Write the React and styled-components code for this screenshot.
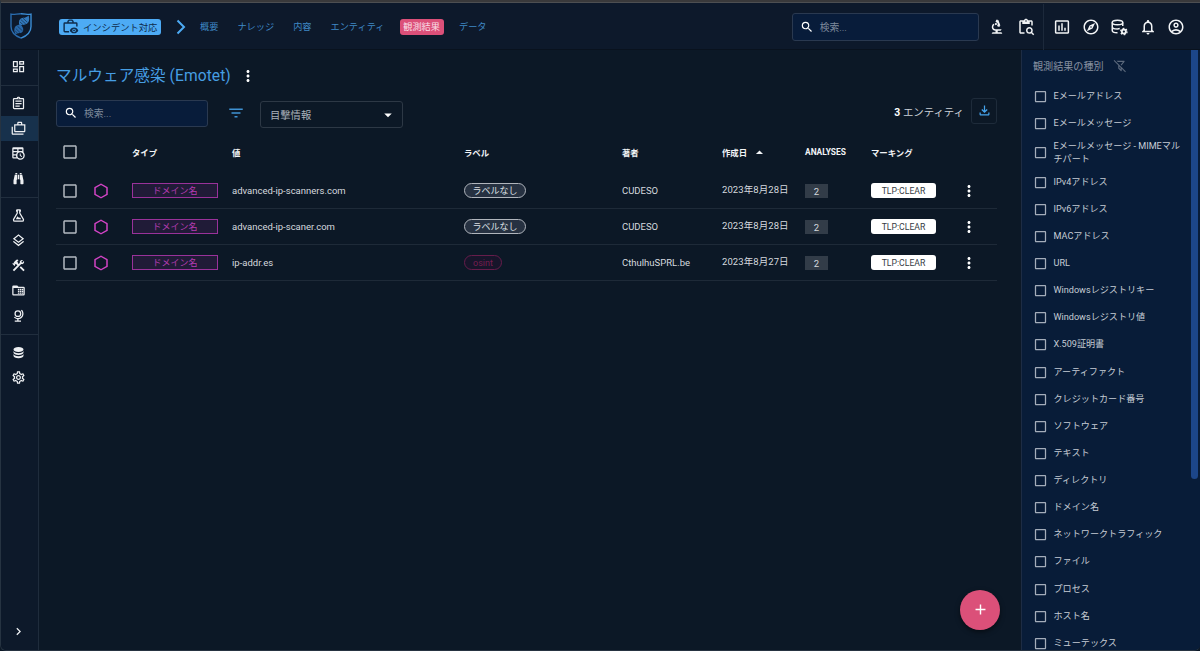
import React from "react";
import styled, { createGlobalStyle, css } from "styled-components";
import {
  MdOutlineDashboard,
  MdOutlineAssignment,
  MdOutlineCases,
  MdOutlineLayers,
  MdConstruction,
  MdOutlineSettings,
  MdChevronRight,
  MdSearch,
  MdBiotech,
  MdOutlineContentPasteSearch,
  MdInsertChartOutlined,
  MdOutlineExplore,
  MdNotificationsNone,
  MdOutlineAccountCircle,
  MdMoreVert,
  MdFilterList,
  MdArrowDropDown,
  MdArrowDropUp,
  MdOutlineFileDownload,
  MdCheckBoxOutlineBlank,
  MdAdd,
} from "react-icons/md";

const GlobalStyle = createGlobalStyle`
  * {
    box-sizing: border-box;
  }

  body {
    margin: 0;
    background: #0c1826;
    font-family: "Roboto", "Noto Sans CJK JP", sans-serif;
    font-size: 9.75px;
    color: #d5d9df;
    overflow: hidden;
  }

  svg {
    display: block;
    flex-shrink: 0;
  }
`;

const paths = {
  timetable:
    "M14,12H15.5V14.82L17.94,16.23L17.19,17.53L14,15.69V12M4,2H18A2,2 0 0,1 20,4V10.1C21.24,11.36 22,13.09 22,15A7,7 0 0,1 15,22C13.09,22 11.36,21.24 10.1,20H4A2,2 0 0,1 2,18V4A2,2 0 0,1 4,2M4,15V18H8.67C8.24,17.09 8,16.07 8,15H4M4,8H10V5H4V8M18,8V5H12V8H18M4,13H8.29C8.63,11.85 9.26,10.82 10.1,10H4V13M15,10.15A4.85,4.85 0 0,0 10.15,15C10.15,17.68 12.32,19.85 15,19.85A4.85,4.85 0 0,0 19.85,15C19.85,12.32 17.68,10.15 15,10.15Z",
  binoculars:
    "M11,6H13V13H11V6M9,20A1,1 0 0,1 8,21H5A1,1 0 0,1 4,20V15L6,6H10V13A1,1 0 0,1 9,14V20M10,5H7V3H10V5M15,20V14A1,1 0 0,1 14,13V6H18L20,15V20A1,1 0 0,1 19,21H16A1,1 0 0,1 15,20M14,5V3H17V5H14Z",
  flask:
    "M5,19A1,1 0 0,0 6,20H18A1,1 0 0,0 19,19C19,18.79 18.93,18.59 18.82,18.43L13,8.35V4H11V8.35L5.18,18.43C5.07,18.59 5,18.79 5,19M6,22A3,3 0 0,1 3,19C3,18.4 3.18,17.84 3.5,17.37L9,7.81V6A1,1 0 0,1 8,5V4A2,2 0 0,1 10,2H14A2,2 0 0,1 16,4V5A1,1 0 0,1 15,6V7.81L20.5,17.37C20.82,17.84 21,18.4 21,19A3,3 0 0,1 18,22H6M13,16L14.34,14.66L16.27,18H7.73L10.39,13.39L13,16Z",
  folderTable:
    "M20,6H12L10,4H4A2,2 0 0,0 2,6V18A2,2 0 0,0 4,20H20A2,2 0 0,0 22,18V8A2,2 0 0,0 20,6M20,18H4V8H20V18M11,9H13.4V11.2H11V9M14.2,9H16.4V11.2H14.2V9M17.2,9H19.4V11.2H17.2V9M11,12H13.4V14.2H11V12M14.2,12H16.4V14.2H14.2V12M17.2,12H19.4V14.2H17.2V12M11,15H13.4V17.2H11V15M14.2,15H16.4V17.2H14.2V15M17.2,15H19.4V17.2H17.2V15Z",
  globe:
    "M17.36,2.64L15.95,4.06C17.26,5.37 18,7.14 18,9A7,7 0 0,1 11,16C9.15,16 7.37,15.26 6.06,13.95L4.64,15.36C6.08,16.8 7.97,17.71 10,17.93V20H6V22H16V20H12V17.94C16.55,17.43 20,13.58 20,9C20,6.62 19.05,4.33 17.36,2.64M11,3.5A5.5,5.5 0 0,0 5.5,9A5.5,5.5 0 0,0 11,14.5A5.5,5.5 0 0,0 16.5,9A5.5,5.5 0 0,0 11,3.5M11,5.5C12.94,5.5 14.5,7.07 14.5,9A3.5,3.5 0 0,1 11,12.5A3.5,3.5 0 0,1 7.5,9A3.5,3.5 0 0,1 11,5.5Z",
  database:
    "M12,3C7.58,3 4,4.79 4,7C4,9.21 7.58,11 12,11C16.42,11 20,9.21 20,7C20,4.79 16.42,3 12,3M4,9V12C4,14.21 7.58,16 12,16C16.42,16 20,14.21 20,12V9C20,11.21 16.42,13 12,13C7.58,13 4,11.21 4,9M4,14V17C4,19.21 7.58,21 12,21C16.42,21 20,19.21 20,17V14C20,16.21 16.42,18 12,18C7.58,18 4,16.21 4,14Z",
  hexagon:
    "M21,16.5C21,16.88 20.79,17.21 20.47,17.38L12.57,21.82C12.41,21.94 12.21,22 12,22C11.79,22 11.59,21.94 11.43,21.82L3.53,17.38C3.21,17.21 3,16.88 3,16.5V7.5C3,7.12 3.21,6.79 3.53,6.62L11.43,2.18C11.59,2.06 11.79,2 12,2C12.21,2 12.41,2.06 12.57,2.18L20.47,6.62C20.79,6.79 21,7.12 21,7.5V16.5M12,4.15L5,8.09V15.91L12,19.85L19,15.91V8.09L12,4.15Z",
  filterOff:
    "M2.39,1.73L1.11,3L9,10.89V15.87C8.96,16.16 9.06,16.47 9.29,16.7L13.3,20.71C13.69,21.1 14.32,21.1 14.71,20.71C14.94,20.5 15.04,20.18 15,19.88V16.89L20.84,22.73L22.11,21.46L15,14.35V14.34L13,12.35L11,10.34L4.15,3.5L2.39,1.73M6.21,3L8.2,5H16.96L13.11,9.91L14.53,11.33L19.79,4.62C20.13,4.19 20.05,3.56 19.62,3.22C19.43,3.08 19.22,3 19,3H6.21M11,12.89L13,14.89V17.58L11,15.58V12.89Z",
};

const Icon = ({ name, size = 15 }) => (
  <svg width={size} height={size} viewBox="0 0 24 24" fill="currentColor">
    <path fillRule="evenodd" d={paths[name]} />
  </svg>
);

const BriefcaseEyeIcon = () => (
  <svg width="17" height="17" viewBox="0 0 24 24" fill="none" stroke="currentColor" strokeWidth="2">
    <path d="M10 19.5H4a1 1 0 0 1-1-1V8a1 1 0 0 1 1-1h16a1 1 0 0 1 1 1v4M8.500 7V4.500l1.500-1.500h4l1.500 1.500V7" />
    <path
      fill="currentColor"
      stroke="none"
      fillRule="evenodd"
      d="M17 13.500c-2.800 0-5 1.600-6 4 1 2.400 3.200 4 6 4s5-1.600 6-4c-1-2.400-3.200-4-6-4m0 1.500a2.500 2.500 0 1 1 0 5 2.500 2.500 0 0 1 0-5m0 1.200a1.300 1.300 0 1 0 0 2.600 1.300 1.300 0 0 0 0-2.600"
    />
  </svg>
);

const DatabaseCogIcon = () => (
  <svg width="18" height="18" viewBox="0 0 24 24" fill="none" stroke="currentColor" strokeWidth="2">
    <ellipse cx="10" cy="6" rx="7" ry="3" />
    <path d="M3 6v10.500c0 1.600 3 3 7 3M3 11.500c0 1.600 3 3 7 3 1.300 0 2-.1 3-.4M17 6v4.500" />
    <circle cx="18.500" cy="18" r="2.700" strokeWidth="2.400" />
    <circle cx="18.500" cy="18" r="4.300" strokeWidth="1.600" strokeDasharray="2.250 2.250" />
  </svg>
);

const LogoIcon = () => (
  <svg width="22" height="26" viewBox="0 0 22 26" fill="none">
    <path
      d="M11 .8c-4 0-7 1-10 .4v12.300C1 19 5.500 23 11 25.200"
      stroke="#2a6cae"
      strokeWidth="1.400"
    />
    <path
      d="M11 .8c4 0 7 1 10 .4v12.300c0 5.500-4.500 9.500-10 11.700"
      stroke="#3b8ed6"
      strokeWidth="1.400"
    />
    <path
      d="M18.600 2.400c1.400 4 .4 7.600-2.800 8.900-2.400.9-4.300.6-5.800 1.700C8.400 10.500 8.600 7 10.800 5.500c1.800-1 3.400-.4 5-1.200 1.200-.6 2-1.200 2.800-1.900z"
      fill="#3278ba"
    />
    <path
      d="M10.400 11.400c1.800 1.500 3.300 3.600 2.800 6-.5 1.900-2 2.500-3.600 2.700-1.800.2-2.700.5-3.800 1.500C4.100 19.300 3.800 16 5 13.900c1-1.700 3.200-2.300 5.400-2.500z"
      fill="#2867a8"
    />
    <path
      d="M10.800 6.500l5 4.500M13 5.200l4.300 4M9.800 8.800l3.300 3M5.800 15.500l4.500 4.400M5.200 18l2.500 2.400M7.500 13.300l5 4.500"
      stroke="#14304f"
      strokeWidth=".7"
    />
  </svg>
);

const Frame = styled.div`
  display: flex;
  flex-direction: column;
  width: 1200px;
  height: 651px;
  overflow: hidden;
  border-top: 2px solid #39393b;
  border-left: 1px solid #263341;
  border-bottom: 1px solid #263341;
  border-radius: 0 0 6px 6px;
`;

const TopBar = styled.header`
  display: flex;
  align-items: center;
  height: 48px;
  padding-top: 1px;
  flex-shrink: 0;
  background: #0d192b;
  border-top: 1px solid #4d4f52;
  border-bottom: 1px solid #09121e;
`;

const Logo = styled.div`
  width: 58px;
  padding: 0 0 2px 8.500px;
`;

const CaseChip = styled.div`
  display: flex;
  align-items: center;
  gap: 4px;
  width: 102px;
  height: 16px;
  padding-left: 3px;
  border-radius: 3px;
  background: #4dabf5;
  color: #0f2c4c;
  font-size: 9.3px;
  white-space: nowrap;
`;

const Separator = styled.div`
  display: flex;
  justify-content: center;
  width: 39px;
  color: #4dabf5;
`;

const Nav = styled.nav`
  display: flex;
  align-items: center;
  gap: 19px;
  flex: 1;
`;

const NavItem = styled.a`
  height: 16px;
  line-height: 16px;
  font-size: 9.2px;
  color: #3f88c5;
  white-space: nowrap;

  ${({ $active }) =>
    $active &&
    css`
      margin: 0 -3.700px -0px -4px;
      padding: 0 3.700px;
      border-radius: 3px;
      background: #dc5079;
      color: #f9dde6;
    `}
`;

const SearchField = styled.div`
  display: flex;
  align-items: center;
  gap: 6px;
  width: ${({ $width }) => $width}px;
  height: ${({ $height }) => $height}px;
  padding-left: 7px;
  border: 1px solid #2a3950;
  border-radius: 3px;
  background: #081c3a;
  color: #7f8b9d;
  font-size: 9.75px;

  svg {
    color: #fff;
  }
`;

const TopIcons = styled.div`
  display: flex;
  align-items: center;
  height: 46px;
  color: #f1f3f5;

  svg {
    width: 18px;
    height: 18px;
  }
`;

const QuickIcons = styled(TopIcons)`
  gap: 11px;
  padding: 0 8.500px 0 9px;
  border-right: 1px solid #1c293b;
`;

const UserIcons = styled(TopIcons)`
  gap: 10.600px;
  padding: 0 14.700px 0 8.800px;
`;

const Body = styled.div`
  display: flex;
  flex: 1;
  min-height: 0;
`;

const Sidebar = styled.aside`
  display: flex;
  flex-direction: column;
  width: 38px;
  flex-shrink: 0;
  border-right: 1px solid #1f2c3c;
  background: #0d192a;
  color: #eef0f3;
`;

const MenuGroup = styled.div`
  padding: 5.500px 0;

  &:first-child {
    padding-top: 4px;
  }

  & + & {
    border-top: 1px solid #212e3e;
  }
`;

const MenuItem = styled.div`
  display: flex;
  align-items: center;
  justify-content: center;
  height: 25px;
  padding-right: 2px;
  background: ${({ $active }) => ($active ? "#17314c" : "transparent")};
`;

const ExpandButton = styled.div`
  display: flex;
  justify-content: center;
  margin-top: auto;
  padding: 0 2px 11px 0;
`;

const Main = styled.main`
  display: flex;
  flex-direction: column;
  position: relative;
  flex: 1;
  padding: 15px 24px 0 17px;
  background: #0c1826;
`;

const TitleRow = styled.div`
  display: flex;
  align-items: center;
  gap: 8px;
  height: 21px;
  color: #fff;
`;

const Title = styled.h1`
  margin: 0;
  padding-top: 1px;
  font-size: 15.600px;
  letter-spacing: 0.07px;
  font-weight: 400;
  line-height: 21px;
  color: #469ee3;
  white-space: nowrap;
`;

const Toolbar = styled.div`
  display: flex;
  align-items: center;
  height: 28px;
  margin-top: 13px;
`;

const FilterButton = styled.div`
  display: flex;
  justify-content: center;
  width: 52px;
  padding-left: 3px;
  color: #3f92d3;
`;

const Select = styled.div`
  display: flex;
  align-items: center;
  justify-content: space-between;
  width: 143px;
  height: 27px;
  margin-top: 3px;
  padding: 0 5px 0 9px;
  border: 1px solid #2d3845;
  border-radius: 3px;
  font-size: 10.300px;
  color: #aab1ba;

  svg {
    color: #fff;
  }
`;

const EntityCount = styled.div`
  margin: 0 7px 4px auto;
  font-size: 10.400px;
  color: #cdd2d8;

  strong {
    color: #fff;
  }
`;

const DownloadButton = styled.div`
  display: flex;
  align-items: center;
  justify-content: center;
  width: 26px;
  height: 26px;
  margin-bottom: 5px;
  border: 1px solid #1e2b3a;
  border-radius: 3px;
  color: #45a3ec;
`;

const Row = styled.div`
  display: grid;
  grid-template-columns: 28px 48px 100px 232px 158px 100px 83px 66px 74px 1fr;
  align-items: center;
  height: 36px;
  border-bottom: 1px solid #1e2a38;
  font-size: 9.500px;
  white-space: nowrap;
`;

const HeadRow = styled(Row)`
  height: 46px;
  padding-top: 4px;
  border-bottom: 0;
  font-size: 8.400px;
  font-weight: 700;
  color: #f2f4f6;
`;

const CheckCell = styled.div`
  padding-left: 5px;
  color: #b3b9c1;
`;

const HexCell = styled.div`
  padding-left: 8px;
  color: #d143c4;
`;

const SortCell = styled.div`
  display: flex;
  align-items: center;
  gap: 4px;
`;

const DateCell = styled.div`
  letter-spacing: 0.08px;
  line-height: 14px;
  padding-bottom: 1px;
`;

const TypeChip = styled.div`
  width: 86px;
  height: 15px;
  border: 1px solid #99329a;
  background: #201b37;
  color: #b43bb0;
  font-size: 9px;
  line-height: 14px;
  text-align: center;
`;

const LabelChip = styled.div`
  width: ${({ $muted }) => ($muted ? 38 : 62)}px;
  height: 15px;
  border: 1px solid ${({ $muted }) => ($muted ? "#661d4b" : "#b0b5bc")};
  border-radius: 8px;
  background: ${({ $muted }) => ($muted ? "#17152a" : "#263141")};
  color: ${({ $muted }) => ($muted ? "#761d50" : "#dde0e4")};
  font-size: 9px;
  line-height: 14px;
  text-align: center;
`;

const CountChip = styled.div`
  width: 23px;
  height: 14px;
  margin-top: 1px;
  background: #323c48;
  font-size: 9.500px;
  line-height: 15px;
  text-align: center;
`;

const MarkingChip = styled.div`
  width: 65px;
  height: 15px;
  border-radius: 3px;
  background: #fff;
  color: #343a42;
  font-size: 8.700px;
  line-height: 16px;
  text-align: center;
`;

const MenuCell = styled.div`
  padding-left: 14.500px;
  color: #fff;
`;

const AddButton = styled.button`
  position: absolute;
  right: 21px;
  bottom: 20.500px;
  display: flex;
  align-items: center;
  justify-content: center;
  width: 40px;
  height: 40px;
  padding: 0;
  border: 0;
  border-radius: 50%;
  background: #db5079;
  color: #fff;
  box-shadow: 0 2px 5px rgba(0, 0, 0, 0.5);
`;

const Drawer = styled.aside`
  display: flex;
  width: 179px;
  flex-shrink: 0;
  border-left: 1px solid #1d2c44;
  background: #081c38;
`;

const DrawerContent = styled.div`
  flex: 1;
  padding: 4px 6px 0 10.500px;
  overflow: hidden;
`;

const DrawerTitle = styled.div`
  display: flex;
  align-items: center;
  gap: 9px;
  height: 22px;
  margin-bottom: 6.700px;
  padding-left: 0.500px;
  font-size: 10.100px;
  color: #8791a1;

  svg {
    margin-top: 2px;
    color: #5d6a7d;
  }
`;

const FilterRow = styled.div`
  display: flex;
  align-items: center;
  gap: 6px;
  height: ${({ $tall }) => ($tall ? 31.700 : 27.130)}px;
  color: #c6ccd5;
  font-size: 9.100px;
  line-height: 13px;

  svg {
    color: #a4adba;
  }
`;

const ScrollTrack = styled.div`
  width: 9px;
  background: #081c38;
`;

const ScrollThumb = styled.div`
  width: 7px;
  height: 429px;
  border-radius: 0 0 4px 4px;
  background: #1c4689;
`;

const navItems = ["概要", "ナレッジ", "内容", "エンティティ", "観測結果", "データ"];

const menuGroups = [
  [<MdOutlineDashboard size={15} />],
  [
    <MdOutlineAssignment size={15} />,
    <MdOutlineCases size={15} />,
    <Icon name="timetable" />,
    <Icon name="binoculars" />,
  ],
  [
    <Icon name="flask" />,
    <MdOutlineLayers size={15} />,
    <MdConstruction size={15} />,
    <Icon name="folderTable" />,
    <Icon name="globe" />,
  ],
  [<Icon name="database" />, <MdOutlineSettings size={15} />],
];

const rows = [
  { value: "advanced-ip-scanners.com", author: "CUDESO", date: "2023年8月28日" },
  { value: "advanced-ip-scaner.com", author: "CUDESO", date: "2023年8月28日" },
  { value: "ip-addr.es", label: "osint", author: "CthulhuSPRL.be", date: "2023年8月27日" },
];

const filters = [
  "Eメールアドレス",
  "Eメールメッセージ",
  "Eメールメッセージ - MIMEマルチパート",
  "IPv4アドレス",
  "IPv6アドレス",
  "MACアドレス",
  "URL",
  "Windowsレジストリキー",
  "Windowsレジストリ値",
  "X.509証明書",
  "アーティファクト",
  "クレジットカード番号",
  "ソフトウェア",
  "テキスト",
  "ディレクトリ",
  "ドメイン名",
  "ネットワークトラフィック",
  "ファイル",
  "プロセス",
  "ホスト名",
  "ミューテックス",
];

const Header = () => (
  <TopBar>
    <Logo>
      <LogoIcon />
    </Logo>
    <CaseChip>
      <BriefcaseEyeIcon />
      インシデント対応
    </CaseChip>
    <Separator>
      <svg width="10" height="16" viewBox="0 0 10 16" fill="none" stroke="currentColor" strokeWidth="2">
        <path d="M1.500 1.500L8 8l-6.500 6.500" />
      </svg>
    </Separator>
    <Nav>
      {navItems.map((item) => (
        <NavItem key={item} $active={item === "観測結果"}>
          {item}
        </NavItem>
      ))}
    </Nav>
    <SearchField $width={187} $height={28}>
      <MdSearch size={14} />
      検索...
    </SearchField>
    <QuickIcons>
      <MdBiotech />
      <MdOutlineContentPasteSearch />
    </QuickIcons>
    <UserIcons>
      <MdInsertChartOutlined />
      <MdOutlineExplore />
      <DatabaseCogIcon />
      <MdNotificationsNone />
      <MdOutlineAccountCircle />
    </UserIcons>
  </TopBar>
);

const Menu = () => (
  <Sidebar>
    {menuGroups.map((group, g) => (
      <MenuGroup key={g}>
        {group.map((icon, i) => (
          <MenuItem key={i} $active={g === 1 && i === 1}>
            {icon}
          </MenuItem>
        ))}
      </MenuGroup>
    ))}
    <ExpandButton>
      <MdChevronRight size={15} />
    </ExpandButton>
  </Sidebar>
);

const ObservablesTable = () => (
  <div>
    <HeadRow>
      <CheckCell>
        <MdCheckBoxOutlineBlank size={18} />
      </CheckCell>
      <span />
      <span>タイプ</span>
      <span>値</span>
      <span>ラベル</span>
      <span>著者</span>
      <SortCell>
        作成日 <MdArrowDropUp size={17} />
      </SortCell>
      <span>ANALYSES</span>
      <span>マーキング</span>
    </HeadRow>
    {rows.map((row) => (
      <Row key={row.value}>
        <CheckCell>
          <MdCheckBoxOutlineBlank size={18} />
        </CheckCell>
        <HexCell>
          <Icon name="hexagon" size={18} />
        </HexCell>
        <TypeChip>ドメイン名</TypeChip>
        <span>{row.value}</span>
        <LabelChip $muted={!!row.label}>{row.label || "ラベルなし"}</LabelChip>
        <span>{row.author}</span>
        <DateCell>{row.date}</DateCell>
        <CountChip>2</CountChip>
        <MarkingChip>TLP:CLEAR</MarkingChip>
        <MenuCell>
          <MdMoreVert size={18} />
        </MenuCell>
      </Row>
    ))}
  </div>
);

const App = () => {
  return (
    <Frame>
      <GlobalStyle />
      <Header />
      <Body>
        <Menu />
        <Main>
          <TitleRow>
            <Title>マルウェア感染 (Emotet)</Title>
            <MdMoreVert size={18} />
          </TitleRow>
          <Toolbar>
            <SearchField $width={152} $height={27}>
              <MdSearch size={14} />
              検索...
            </SearchField>
            <FilterButton>
              <MdFilterList size={18} />
            </FilterButton>
            <Select>
              目撃情報
              <MdArrowDropDown size={18} />
            </Select>
            <EntityCount>
              <strong>3</strong> エンティティ
            </EntityCount>
            <DownloadButton>
              <MdOutlineFileDownload size={15} />
            </DownloadButton>
          </Toolbar>
          <ObservablesTable />
          <AddButton>
            <MdAdd size={17} />
          </AddButton>
        </Main>
        <Drawer>
          <DrawerContent>
            <DrawerTitle>
              観測結果の種別
              <Icon name="filterOff" size={14} />
            </DrawerTitle>
            {filters.map((filter) => (
              <FilterRow key={filter} $tall={filter.includes("MIME")}>
                <MdCheckBoxOutlineBlank size={15} />
                {filter}
              </FilterRow>
            ))}
          </DrawerContent>
          <ScrollTrack>
            <ScrollThumb />
          </ScrollTrack>
        </Drawer>
      </Body>
    </Frame>
  );
};

export default App;
